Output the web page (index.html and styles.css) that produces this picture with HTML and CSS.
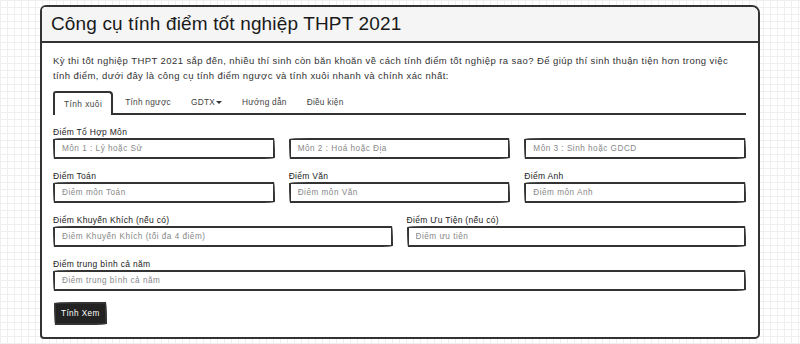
FILE: index.html
```html
<!DOCTYPE html>
<html lang="vi">
<head>
<meta charset="utf-8">
<title>Công cụ tính điểm tốt nghiệp THPT 2021</title>
<link rel="stylesheet" href="styles.css">
</head>
<body>
<div class="card">
  <div class="card-header">Công cụ tính điểm tốt nghiệp THPT 2021</div>
  <div class="card-body">
    <p class="intro">Kỳ thi tốt nghiệp THPT 2021 sắp đến, nhiều thí sinh còn băn khoăn về cách tính điểm tốt nghiệp ra sao? Để giúp thí sinh thuận tiện hơn trong việc tính điểm, dưới đây là công cụ tính điểm ngược và tính xuôi nhanh và chính xác nhất:</p>
    <ul class="tabs">
      <li class="tab active">Tính xuôi</li>
      <li class="tab">Tính ngược</li>
      <li class="tab">GDTX<span class="caret"></span></li>
      <li class="tab">Hướng dẫn</li>
      <li class="tab">Điều kiện</li>
    </ul>
    <div class="group">
      <label class="label">Điểm Tổ Hợp Môn</label>
      <div class="row3">
        <input class="input" placeholder="Môn 1 : Lý hoặc Sử">
        <input class="input" placeholder="Môn 2 : Hoá hoặc Địa">
        <input class="input" placeholder="Môn 3 : Sinh hoặc GDCD">
      </div>
    </div>
    <div class="row3 group">
      <div class="field">
        <label class="label">Điểm Toán</label>
        <input class="input" placeholder="Điểm môn Toán">
      </div>
      <div class="field">
        <label class="label">Điểm Văn</label>
        <input class="input" placeholder="Điểm môn Văn">
      </div>
      <div class="field">
        <label class="label">Điểm Anh</label>
        <input class="input" placeholder="Điểm môn Anh">
      </div>
    </div>
    <div class="row2 group">
      <div class="field">
        <label class="label">Điểm Khuyến Khích (nếu có)</label>
        <input class="input" placeholder="Điểm Khuyến Khích (tối đa 4 điểm)">
      </div>
      <div class="field">
        <label class="label">Điểm Ưu Tiện (nếu có)</label>
        <input class="input" placeholder="Điểm ưu tiên">
      </div>
    </div>
    <div class="group">
      <label class="label">Điểm trung bình cả năm</label>
      <input class="input" placeholder="Điểm trung bình cả năm">
    </div>
    <button class="btn">Tính Xem</button>
  </div>
</div>
</body>
</html>
```
FILE: styles.css
```css
* { box-sizing: border-box; }
html, body { margin: 0; padding: 0; }
body {
  width: 800px;
  height: 344px;
  overflow: hidden;
  font-family: "Liberation Sans", Arial, sans-serif;
  color: #222;
  background-color: #fff;
  background-image:
    linear-gradient(#efefef 1px, transparent 1px),
    linear-gradient(90deg, #efefef 1px, transparent 1px);
  background-size: 7px 7px;
  padding-top: 5px;
}
.card {
  margin: 0 0 0 40px;
  width: 720px;
  height: 334px;
  border: 2px solid #333;
  border-radius: 6px 8px 5px 4px;
  background: #fff;
  overflow: hidden;
}
.card-header {
  height: 36px;
  background: #f5f5f5;
  border-bottom: 2px solid #333;
  padding: 0 9px;
  font-size: 19px;
  line-height: 34px;
  letter-spacing: 0.15px;
  color: #1a1a1a;
}
.card-body {
  padding: 10px 12px 0 11px;
}
.intro {
  margin: 0 0 8px;
  font-size: 9.5px;
  line-height: 15px;
  letter-spacing: 0.42px;
  color: #333;
}
.tabs {
  list-style: none;
  margin: 0 0 11px;
  padding: 0;
  display: flex;
  border-bottom: 2px solid #333;
  height: 24px;
}
.tab {
  font-size: 8.3px;
  letter-spacing: 0.25px;
  color: #444;
  padding: 0 10px;
  height: 22px;
  display: flex;
  align-items: center;
}
.tab.active {
  border: 2px solid #333;
  border-bottom: none;
  border-radius: 3px 4px 0 0;
  height: 24px;
  background: #fff;
  margin-bottom: -2px;
  padding: 0 9px 0 9px;
  margin-right: 2px;
  letter-spacing: 0.45px;
}
.caret {
  display: inline-block;
  width: 0;
  height: 0;
  margin-left: 1px;
  border-left: 3px solid transparent;
  border-right: 3px solid transparent;
  border-top: 3.5px solid #333;
}
.group { margin-bottom: 11px; }
.label {
  display: block;
  font-size: 8.5px;
  letter-spacing: 0.3px;
  line-height: 12px;
  color: #222;
}
.row3 {
  display: grid;
  grid-template-columns: 1fr 1fr 1fr;
  column-gap: 14px;
}
.row2 {
  display: grid;
  grid-template-columns: 1fr 1fr;
  column-gap: 14px;
}
.field { display: flex; flex-direction: column; }
.input {
  display: block;
  width: 100%;
  height: 21px;
  margin: 0;
  padding: 0 7px;
  border: 2px solid #333;
  border-radius: 255px 15px 225px 15px / 15px 225px 15px 255px;
  font-family: "Liberation Sans", Arial, sans-serif;
  font-size: 8.2px;
  letter-spacing: 0.5px;
  color: #333;
  background: #fff;
  outline: none;
}
.input::placeholder { color: #888; }
.btn {
  display: block;
  margin: 0 0 0 1px;
  height: 23px;
  padding: 0 5px;
  background: #222;
  color: #fff;
  border: 2px solid #333;
  border-radius: 255px 15px 225px 15px / 15px 225px 15px 255px;
  font-family: "Liberation Sans", Arial, sans-serif;
  font-size: 8.2px;
  letter-spacing: 0.4px;
}
```
